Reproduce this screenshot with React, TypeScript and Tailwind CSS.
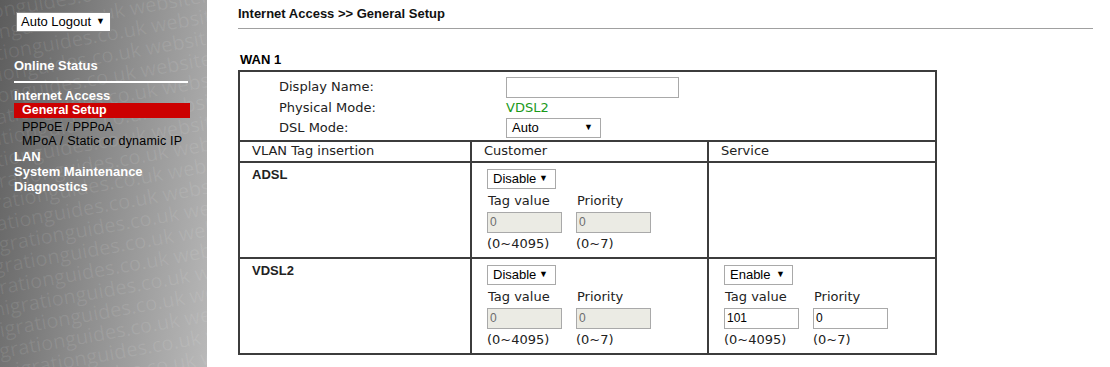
import React from 'react';

const sideFont = { fontFamily: '"Liberation Sans", Arial, sans-serif' };

function Watermark() {
  const rows = Array.from({ length: 22 });
  return (
    <div className="pointer-events-none absolute inset-0 overflow-hidden">
      <div className="absolute left-[-70px] top-[-10px] w-[520px] -rotate-[10deg] origin-top-left">
        {rows.map((_, i) => (
          <div
            key={i}
            className="whitespace-nowrap text-[20px] leading-[21px] text-white/[0.09]"
            style={{ marginLeft: -(i % 3) * 9, fontFamily: '"Open Sans", sans-serif' }}>
            migrationguides.co.uk websitemigrationguides.co.uk
          </div>
        ))}
      </div>
    </div>
  );
}

function Select({ value, width }: { value: string; width: string }) {
  return (
    <div
      className={`flex h-[20px] ${width} items-center justify-between border border-[#a9a9a9] bg-white pl-[5px] pr-[7px] text-[13px] text-black`}
      style={sideFont}>
      <span>{value}</span>
      <span className="text-[9px]">▼</span>
    </div>
  );
}

function Field({ value, disabled }: { value: string; disabled?: boolean }) {
  return (
    <div
      className={`flex h-[21px] w-[75px] items-center border border-[#a9a9a9] pl-[2px] text-[12px] ${
        disabled ? 'bg-[#ebebe4] text-[#6d6d6d]' : 'bg-white text-black'
      }`}
      style={sideFont}>
      {value}
    </div>
  );
}

function TagBlock({ sel, tag, pri, disabled }: { sel: string; tag: string; pri: string; disabled?: boolean }) {
  return (
    <div className="flex flex-col pl-[15px] pt-[6px] pb-[5px]">
      <Select value={sel} width="w-[69px]" />
      <div className="mt-[4px] flex gap-[14px] leading-[16px]">
        <div className="flex flex-col">
          <span className="pl-[1px]">Tag value</span>
          <div className="mt-[3px]"><Field value={tag} disabled={disabled} /></div>
          <span className="mt-[3px]">(0~4095)</span>
        </div>
        <div className="flex flex-col">
          <span className="pl-[1px]">Priority</span>
          <div className="mt-[3px]"><Field value={pri} disabled={disabled} /></div>
          <span className="mt-[3px]">(0~7)</span>
        </div>
      </div>
    </div>
  );
}

function Sidebar() {
  return (
    <aside
      className="relative h-[367px] w-[207px] shrink-0 overflow-hidden bg-[linear-gradient(100deg,#5c5c5c_0%,#8c8c8c_50%,#b9b9b9_100%)]"
      style={sideFont}>
      <Watermark />
      <div className="relative flex flex-col pl-[14px] pt-[12px]">
        <div className="ml-[2px] flex h-[20px] w-[95px] items-center justify-between border border-[#888] bg-white pl-[4px] pr-[5px] text-[13px] text-black">
          <span>Auto Logout</span>
          <span className="text-[9px]">▼</span>
        </div>
        <div className="mt-[26px] text-[13px] font-bold leading-[15px] text-white">Online Status</div>
        <div className="mt-[8px] h-[2px] w-[174px] bg-white" />
        <div className="mt-[5px] text-[13px] font-bold leading-[15px] text-white">Internet Access</div>
        <div className="w-[176px] bg-[#cc0000] pl-[8px] text-[12.5px] font-bold leading-[15px] text-white">General Setup</div>
        <div className="pt-[2px] pl-[8px] text-[12.5px] leading-[14px] text-black">PPPoE / PPPoA</div>
        <div className="pl-[8px] text-[12.5px] leading-[15px] tracking-[0.2px] text-black">MPoA / Static or dynamic IP</div>
        <div className="text-[13px] font-bold leading-[15px] text-white">LAN</div>
        <div className="text-[13px] font-bold leading-[15px] text-white">System Maintenance</div>
        <div className="text-[13px] font-bold leading-[15px] text-white">Diagnostics</div>
      </div>
    </aside>
  );
}

export default function App() {
  return (
    <div className="flex h-[367px] w-[1110px] overflow-hidden bg-white">
      <Sidebar />
      <main className="flex flex-col pl-[31px] pr-[17px]">
        <div className="pt-[6px] text-[13px] font-bold leading-[15px] text-[#111]" style={sideFont}>
          Internet Access &gt;&gt; General Setup
        </div>
        <div className="mt-[7px] h-px w-[855px] bg-[#a0a0a0]" />
        <div className="mt-[23px] pl-[2px] text-[13px] font-bold leading-[15px] text-black" style={sideFont}>
          WAN 1
        </div>
        <div
          className="mt-[3px] w-[699px] border-2 border-[#3c3c3c] text-[13px] text-[#222]"
          style={{ fontFamily: '"DejaVu Sans", Verdana, sans-serif' }}>
          <div className="grid grid-cols-[266px_1fr] pb-[2px] pt-[5px] leading-[19.5px]">
            <span className="pl-[39px]">Display Name:</span>
            <div className="flex items-center">
              <div className="h-[21px] w-[173px] border border-[#a9a9a9] bg-white" />
            </div>
            <span className="pl-[39px]">Physical Mode:</span>
            <span className="text-[#1a9a1a]">VDSL2</span>
            <span className="pl-[39px]">DSL Mode:</span>
            <div className="flex items-center">
              <Select value="Auto" width="w-[95px]" />
            </div>
          </div>
          <table className="w-full border-collapse">
            <tbody>
              <tr className="h-[21px] leading-[16px]">
                <td className="w-[231px] border-t-2 border-r-2 border-[#3c3c3c] pl-[12px]">VLAN Tag insertion</td>
                <td className="w-[237px] border-t-2 border-r-2 border-[#3c3c3c] pl-[12px]">Customer</td>
                <td className="border-t-2 border-[#3c3c3c] pl-[12px]">Service</td>
              </tr>
              <tr className="align-top">
                <td className="border-t-2 border-r-2 border-[#3c3c3c] pl-[12px] pt-[2px] font-bold" style={sideFont}>
                  ADSL
                </td>
                <td className="border-t-2 border-r-2 border-[#3c3c3c]">
                  <TagBlock sel="Disable" tag="0" pri="0" disabled />
                </td>
                <td className="border-t-2 border-[#3c3c3c]" />
              </tr>
              <tr className="align-top">
                <td className="border-t-2 border-r-2 border-[#3c3c3c] pl-[12px] pt-[2px] font-bold" style={sideFont}>
                  VDSL2
                </td>
                <td className="border-t-2 border-r-2 border-[#3c3c3c]">
                  <TagBlock sel="Disable" tag="0" pri="0" disabled />
                </td>
                <td className="border-t-2 border-[#3c3c3c]">
                  <TagBlock sel="Enable" tag="101" pri="0" />
                </td>
              </tr>
            </tbody>
          </table>
        </div>
      </main>
    </div>
  );
}
